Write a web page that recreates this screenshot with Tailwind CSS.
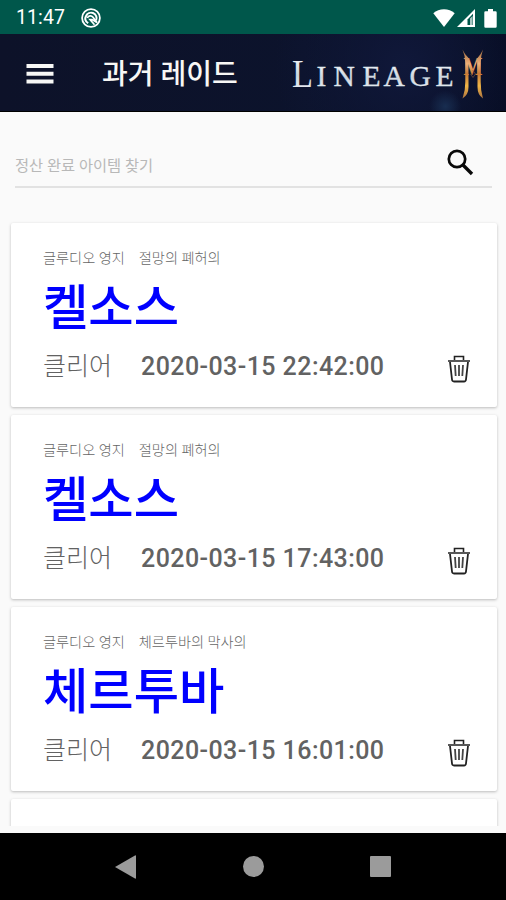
<!DOCTYPE html>
<html lang="ko">
<head>
    <meta charset="UTF-8">
    <meta name="viewport" content="width=device-width, initial-scale=1.0">
    <title>과거 레이드</title>
    <script src="https://cdn.jsdelivr.net/npm/@tailwindcss/browser@4"></script>
    <style>
        body { font-family: Roboto, "Noto Sans CJK KR", sans-serif; }
    </style>
</head>
<body class="bg-[#fafafa]">
<div class="w-[506px] h-[900px] flex flex-col overflow-hidden">

    <!-- Status bar -->
    <div class="h-[34px] shrink-0 bg-[#00574b] flex items-center justify-between pl-4 pr-[9px] pt-0.5 text-white">
        <div class="flex items-center gap-[15px]">
            <span class="w-[50px] text-[19.5px] leading-none tracking-[0.1px] whitespace-nowrap">11:47</span>
            <svg class="w-5 h-5" viewBox="0 0 20 20" fill="none" stroke="currentColor">
                <circle cx="10" cy="10" r="8.9" stroke-width="1.8"/>
                <path d="M7.2 15.200C4.300 13.400 3.700 10.500 5 8C6.200 5.300 9.300 4.100 12 5C15.200 6.200 16.300 9.500 15.100 12.300" stroke-width="2"/>
                <path d="M6.300 10C7.500 7.300 10.500 7.300 12 9.300L16 14.500L11 11.500L9 11.500L13.500 16.800" stroke-width="1.700"/>
            </svg>
        </div>
        <div class="flex items-center">
            <svg class="w-[22px] h-[18px]" viewBox="0 0 22 18" fill="currentColor"><path d="M0.300 4.200C6 -1.100 16 -1.100 21.700 4.200L11 18Z"/></svg>
            <svg class="ml-0.5 w-[18px] h-[18px]" viewBox="0 0 18 18"><path d="M0 18L18 0V18Z" fill="currentColor"/><path d="M10.500 10.500V16H16V4.800Z" fill="#00574b"/><path d="M13 9.500V16H15.600V7Z" fill="#a9c8c3"/></svg>
            <svg class="ml-[9px] w-[13px] h-[19px]" viewBox="0 0 13 19" fill="currentColor"><path d="M4 0h5v2.200h2.500q1.200 0 1.200 1.200v14q0 1.300-1.200 1.300h-10q-1.200 0-1.200-1.300v-14q0-1.200 1.200-1.200H4z"/></svg>
        </div>
    </div>

    <!-- Toolbar -->
    <div class="h-[78px] shrink-0 border-b border-black bg-[radial-gradient(circle_at_88%_94%,#182d50_0px,transparent_16px),radial-gradient(circle_at_80%_40%,#10183a_0px,transparent_130px),linear-gradient(90deg,#0d1229,#0c132c_60%,#060c22)] flex items-center text-[#f7f7f5]">
        <svg class="ml-[26px] w-7 h-5 shrink-0 mt-0.5" viewBox="0 0 28 20" fill="currentColor"><path d="M0.500 0h27v4h-27zM0.500 7.700h27v4h-27zM0.500 15.400h27v4h-27z"/></svg>
        <h1 class="ml-12 pt-1 w-[140px] text-[28px] leading-none font-medium whitespace-nowrap">과거 레이드</h1>
        <svg class="ml-[46px] w-[200px] h-[60px] shrink-0" viewBox="0 0 200 60">
            <defs>
                <linearGradient id="silver" x1="0" y1="0" x2="0" y2="1"><stop offset="0" stop-color="#fff"/><stop offset="0.550" stop-color="#ccd5df"/><stop offset="1" stop-color="#f2f5f8"/></linearGradient>
                <linearGradient id="gold" gradientUnits="userSpaceOnUse" x1="0" y1="6" x2="0" y2="55"><stop offset="0" stop-color="#986239"/><stop offset="0.300" stop-color="#efb078"/><stop offset="0.500" stop-color="#c97a38"/><stop offset="0.750" stop-color="#f0b647"/><stop offset="1" stop-color="#ae743e"/></linearGradient>
            </defs>
            <g fill="url(#silver)" font-family="Liberation Serif, serif">
                <text x="4" y="43.500" font-size="39" textLength="21" lengthAdjust="spacingAndGlyphs">L</text>
                <text y="43" font-size="29.500" x="28.500 45.500 74.500 95.500 121.500 147.500" stroke="#dfe5ec" stroke-width="0.300">INEAGE</text>
            </g>
            <text x="175.500" y="32" font-family="Liberation Serif, serif" font-size="25" font-weight="700" textLength="19" lengthAdjust="spacingAndGlyphs" fill="url(#gold)">M</text>
            <!-- curved gold posts of the emblem -->
            <g fill="url(#gold)">
                <path d="M174.500 6.500Q177 12 180.500 15V44Q180.500 52 174.500 55.500Q177.500 47 177.300 39V20Q177.300 13 174.500 6.500Z"/>
                <path d="M195 6.500Q192.500 12 189.500 15V44Q189.500 52 195 55.500Q192.500 47 192.700 39V20Q192.700 13 195 6.500Z"/>
            </g>
            <path d="M182.500 31L185 34.500L187.500 31M185 27.500L187.500 31" fill="none" stroke="#6d4936" stroke-width="0.800"/>
        </svg>
    </div>

    <!-- Search -->
    <div class="ml-[15px] mr-3.5 mt-[29px] h-[47px] shrink-0 flex items-center justify-between border-b-2 border-[#e2e2e2] pr-[18px]">
        <span class="pt-1.5 text-[15.3px] leading-none text-[#b8b8b8] whitespace-nowrap">정산 완료 아이템 찾기</span>
        <svg class="w-[27px] h-[27px] -mt-0.5" viewBox="0 0 27 27" fill="none" stroke="#090909"><circle cx="10" cy="10" r="8.200" stroke-width="2.700"/><path d="M16 16L25 25" stroke-width="3.400"/></svg>
    </div>

    <!-- Raid list -->
    <div class="mt-[35px] ml-[11px] mr-[9px] h-[603px] flex flex-col gap-2 [clip-path:inset(-3px_-5px_0_-5px)] overflow-visible">
        <div class="h-[184px] shrink-0 rounded-[2px] bg-white shadow-[0_1px_3px_rgba(0,0,0,0.25)] pl-8 pr-[26px] pt-[27px]">
            <div class="flex gap-[14px] h-4 text-[14.2px] leading-4 font-light text-[#666] whitespace-nowrap"><span>글루디오 영지</span><span>절망의 폐허의</span></div>
            <div class="mt-[13px] h-[58px] text-[49.300px] leading-[58px] font-medium text-[#0000ff]">켈소스</div>
            <div class="flex items-center h-[58px] text-[25px] whitespace-nowrap text-[#626262]">
                <span class="w-[98px] font-light pt-0.5">클리어</span>
                <span class="pt-px font-medium tracking-[0.430px]">2020-03-15 22:42:00</span>
                <svg class="ml-auto mt-1.5 w-6 h-7" viewBox="0 0 24 28" fill="none" stroke="#222"><path d="M1 6H23M7.500 5V1.500H16.500V5" stroke-width="1.600"/><path d="M3 7L5 24.500Q5.200 26.500 7 26.500H17Q18.800 26.500 19 24.500L21 7" stroke-width="1.800"/><path d="M8 10L8.700 21M12 10V21M16 10L15.300 21" stroke-width="1.800" stroke="#444"/></svg>
            </div>
        </div>
        <div class="h-[184px] shrink-0 rounded-[2px] bg-white shadow-[0_1px_3px_rgba(0,0,0,0.25)] pl-8 pr-[26px] pt-[27px]">
            <div class="flex gap-[14px] h-4 text-[14.2px] leading-4 font-light text-[#666] whitespace-nowrap"><span>글루디오 영지</span><span>절망의 폐허의</span></div>
            <div class="mt-[13px] h-[58px] text-[49.300px] leading-[58px] font-medium text-[#0000ff]">켈소스</div>
            <div class="flex items-center h-[58px] text-[25px] whitespace-nowrap text-[#626262]">
                <span class="w-[98px] font-light pt-0.5">클리어</span>
                <span class="pt-px font-medium tracking-[0.430px]">2020-03-15 17:43:00</span>
                <svg class="ml-auto mt-1.5 w-6 h-7" viewBox="0 0 24 28" fill="none" stroke="#222"><path d="M1 6H23M7.500 5V1.500H16.500V5" stroke-width="1.600"/><path d="M3 7L5 24.500Q5.200 26.500 7 26.500H17Q18.800 26.500 19 24.500L21 7" stroke-width="1.800"/><path d="M8 10L8.700 21M12 10V21M16 10L15.300 21" stroke-width="1.800" stroke="#444"/></svg>
            </div>
        </div>
        <div class="h-[184px] shrink-0 rounded-[2px] bg-white shadow-[0_1px_3px_rgba(0,0,0,0.25)] pl-8 pr-[26px] pt-[27px]">
            <div class="flex gap-[14px] h-4 text-[14.2px] leading-4 font-light text-[#666] whitespace-nowrap"><span>글루디오 영지</span><span>체르투바의 막사의</span></div>
            <div class="mt-[13px] h-[58px] text-[49.300px] leading-[58px] font-medium text-[#0000ff]">체르투바</div>
            <div class="flex items-center h-[58px] text-[25px] whitespace-nowrap text-[#626262]">
                <span class="w-[98px] font-light pt-0.5">클리어</span>
                <span class="pt-px font-medium tracking-[0.430px]">2020-03-15 16:01:00</span>
                <svg class="ml-auto mt-1.5 w-6 h-7" viewBox="0 0 24 28" fill="none" stroke="#222"><path d="M1 6H23M7.500 5V1.500H16.500V5" stroke-width="1.600"/><path d="M3 7L5 24.500Q5.200 26.500 7 26.500H17Q18.800 26.500 19 24.500L21 7" stroke-width="1.800"/><path d="M8 10L8.700 21M12 10V21M16 10L15.300 21" stroke-width="1.800" stroke="#444"/></svg>
            </div>
        </div>
        <div class="h-[184px] shrink-0 rounded-[2px] bg-white shadow-[0_1px_3px_rgba(0,0,0,0.25)]"></div>
    </div>

    <!-- Navigation bar -->
    <div class="mt-auto h-[67px] shrink-0 bg-black flex items-center justify-between pl-[115px] pr-[115px] text-[#9b9b9b]">
        <svg class="w-[21px] h-6" viewBox="0 0 21 24" fill="currentColor"><path d="M0 12L20 0.500Q21 0 21 1V23Q21 24 20 23.500Z"/></svg>
        <div class="w-[21px] h-[21px] rounded-full bg-[#9b9b9b]"></div>
        <div class="w-[21px] h-[21px] rounded-[1px] bg-[#9b9b9b]"></div>
    </div>
</div>
</body>
</html>
